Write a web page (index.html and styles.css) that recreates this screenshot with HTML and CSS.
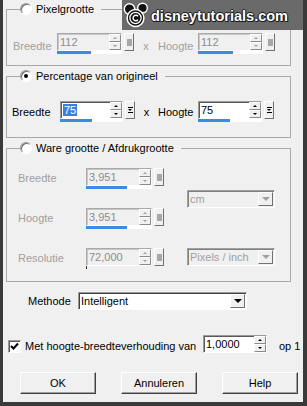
FILE: index.html
```html
<!DOCTYPE html>
<html lang="nl">
<head>
  <meta charset="UTF-8" />
  <meta name="viewport" content="width=device-width, initial-scale=1.0"/>
  <title>Afmetingen wijzigen</title>
  <link rel="stylesheet" href="styles.css">
</head>
<body>

  <div class="dialog">

    <div class="watermark">
      <svg class="logo" width="26" height="26" viewBox="0 0 26 26">
        <circle cx="6.5" cy="7" r="5.2" fill="#111" stroke="#fff" stroke-width="1.4"/>
        <circle cx="19.5" cy="6" r="4.8" fill="#111" stroke="#fff" stroke-width="1.4"/>
        <circle cx="12.5" cy="16" r="8.4" fill="#111" stroke="#fff" stroke-width="1.5"/>
        <circle cx="12.5" cy="16" r="5.6" fill="none" stroke="#fff" stroke-width="1.3"/>
        <path d="M15 14.2 A2.8 2.8 0 1 0 15 17.8" fill="none" stroke="#fff" stroke-width="1.4"/>
      </svg>
      <span class="wm-text">disneytutorials.com</span>
    </div>

    <fieldset class="group">
      <legend><span class="radio"></span>Pixelgrootte</legend>
      <div class="pair-row first">
        <span class="lbl off w-first">Breedte</span>
        <div class="spin off">
          <div class="spin-main">
            <div class="field w65"><span class="val">112</span><span class="arrows"><i class="up"></i><i class="down"></i></span></div>
            <div class="track"><b style="width:52%"></b></div>
          </div>
          <span class="extra"><i class="dot"></i></span>
        </div>
        <span class="times off">x</span>
        <span class="lbl off w-h">Hoogte</span>
        <div class="spin off">
          <div class="spin-main">
            <div class="field w65"><span class="val">112</span><span class="arrows"><i class="up"></i><i class="down"></i></span></div>
            <div class="track"><b style="width:54%"></b></div>
          </div>
          <span class="extra"><i class="dot"></i></span>
        </div>
      </div>
    </fieldset>

    <fieldset class="group">
      <legend><span class="radio on"></span>Percentage van origineel</legend>
      <div class="pair-row second">
        <span class="lbl w-second">Breedte</span>
        <div class="spin">
          <div class="spin-main">
            <div class="field w63"><span class="val"><span class="sel">75</span></span><span class="arrows"><i class="up"></i><i class="down"></i></span></div>
            <div class="track"><b style="width:50%"></b></div>
          </div>
          <span class="extra"><i class="preset"></i></span>
        </div>
        <span class="times narrow">x</span>
        <span class="lbl w-h">Hoogte</span>
        <div class="spin">
          <div class="spin-main">
            <div class="field w64"><span class="val">75</span><span class="arrows"><i class="up"></i><i class="down"></i></span></div>
            <div class="track"><b style="width:50%"></b></div>
          </div>
          <span class="extra"><i class="preset"></i></span>
        </div>
      </div>
    </fieldset>

    <fieldset class="group">
      <legend><span class="radio"></span>Ware grootte / Afdrukgrootte</legend>
      <div class="real-grid">
        <span class="lbl off">Breedte</span>
        <div class="spin off">
          <div class="spin-main">
            <div class="field w66"><span class="val">3,951</span><span class="arrows"><i class="up"></i><i class="down"></i></span></div>
            <div class="track"><b style="width:62%"></b></div>
          </div>
          <span class="extra"><i class="dot"></i></span>
        </div>
        <div class="select off unit"><span>cm</span><span class="drop"></span></div>

        <span class="lbl off">Hoogte</span>
        <div class="spin off">
          <div class="spin-main">
            <div class="field w66"><span class="val">3,951</span><span class="arrows"><i class="up"></i><i class="down"></i></span></div>
            <div class="track"><b style="width:62%"></b></div>
          </div>
          <span class="extra"><i class="dot"></i></span>
        </div>

        <span class="lbl off">Resolutie</span>
        <div class="spin off">
          <div class="spin-main">
            <div class="field w66"><span class="val">72,000</span><span class="arrows"><i class="up"></i><i class="down"></i></span></div>
            <div class="track empty"></div>
          </div>
          <span class="extra"><i class="dot"></i></span>
        </div>
        <div class="select off res"><span>Pixels / inch</span><span class="drop"></span></div>
      </div>
    </fieldset>

    <div class="method-row">
      <span class="lbl">Methode</span>
      <div class="select method"><span>Intelligent</span><span class="drop"></span></div>
    </div>

    <div class="ratio-row">
      <span class="check">
        <svg width="9" height="9" viewBox="0 0 9 9"><path d="M1 4 L3.5 6.5 L8 1.5" fill="none" stroke="#000" stroke-width="2"/></svg>
      </span>
      <span class="ratio-text">Met hoogte-breedteverhouding van</span>
      <div class="field ratio"><span class="val">1,0000</span><span class="arrows"><i class="up"></i><i class="down"></i></span></div>
      <span class="op">op 1</span>
    </div>

    <div class="button-row">
      <button class="btn">OK</button>
      <button class="btn">Annuleren</button>
      <button class="btn">Help</button>
    </div>

  </div>

</body>
</html>
```

FILE: styles.css
```css
body {
  margin: 0;
  font-family: 'Liberation Sans', Arial, sans-serif;
  font-size: 11px;
  color: #000;
  background-color: #3a3a3a;
}
.dialog {
  position: relative;
  width: 307px;
  height: 406px;
  box-sizing: border-box;
  padding-top: 2px;
  background-color: #f0f0f0;
  border-left: 3px solid #3a3a3a;
  border-right: 4px solid #3a3a3a;
  border-bottom: 4px solid #3a3a3a;
  overflow: hidden;
}

/* watermark over the top right */
.watermark {
  position: absolute;
  top: 0;
  right: -4px;
  width: 185px;
  height: 30px;
  background-color: #6a6a6a;
  display: flex;
  align-items: center;
  gap: 2px;
  padding-left: 1px;
  box-sizing: border-box;
  z-index: 2;
}
.wm-text {
  font-weight: bold;
  font-size: 14.5px;
  color: #fff;
  margin-top: 2px;
  text-shadow: 1px 0 0 #1a1a1a, -1px 0 0 #1a1a1a, 0 1px 0 #1a1a1a, 0 -1px 0 #1a1a1a, 1px 1px 0 #1a1a1a;
}

/* group boxes */
.group {
  margin: 3px 12px 0 3px;
  padding: 0;
  min-width: 0;
  border: 1px solid #a9a9a9;
}
.group:first-of-type {
  margin-top: 0;
}
.group legend {
  margin-left: 13px;
  padding: 0 7px 0 0;
  height: 14px;
  display: flex;
  align-items: center;
  gap: 4px;
}
.radio {
  width: 12px;
  height: 12px;
  box-sizing: border-box;
  border-radius: 50%;
  background-color: #fff;
  border: 1px solid;
  border-color: #9a9a9a #fff #fff #9a9a9a;
  box-shadow: inset 1px 1px 0 #6d6d6d;
  display: flex;
  align-items: center;
  justify-content: center;
}
.radio.on::after {
  content: "";
  width: 4px;
  height: 4px;
  border-radius: 50%;
  background-color: #000;
}

.lbl {
  line-height: 13px;
  white-space: nowrap;
}
.off {
  color: #a0a0a0;
}

.pair-row {
  display: flex;
  align-items: flex-start;
}
.pair-row.first {
  padding: 17px 0 11px 6px;
}
.pair-row.second {
  padding: 18px 0 15px 5px;
}
.pair-row.first .lbl,
.pair-row.first .times {
  margin-top: 7px;
}
.pair-row.second .lbl,
.pair-row.second .times {
  margin-top: 5px;
}
.w-first {
  width: 44px;
}
.w-second {
  width: 48px;
}
.w-h {
  width: 35px;
  text-align: right;
  margin-right: 5px;
}
.times {
  width: 24px;
  text-align: center;
  line-height: 13px;
}
.times.narrow {
  width: 23px;
}

/* spin field with slider track */
.spin {
  display: flex;
  align-items: flex-start;
  gap: 2px;
}
.spin-main {
  display: flex;
  flex-direction: column;
}
.field {
  height: 18px;
  box-sizing: border-box;
  display: flex;
  justify-content: space-between;
  background-color: #fff;
  border: 1px solid;
  border-color: #9a9a9a #fff #fff #9a9a9a;
  box-shadow: inset 1px 1px 0 #5a5a5a;
}
.spin.off .field {
  background-color: #f0f0f0;
  border-color: #a8a8a8 #fff #fff #a8a8a8;
  box-shadow: inset 1px 1px 0 #c8c8c8;
  color: #8c8c8c;
}
.w63 { width: 63px; }
.w64 { width: 64px; }
.w65 { width: 65px; }
.w66 { width: 66px; }
.val {
  padding: 2px 0 0 2px;
  line-height: 12px;
}
.sel {
  background-color: #3d7fdc;
  color: #fff;
  padding: 0 1px;
}
.arrows {
  width: 12px;
  display: flex;
  flex-direction: column;
}
.arrows i {
  flex: 1;
  box-sizing: border-box;
  background-color: #f0f0f0;
  border: 1px solid;
  border-color: #fff #8a8a8a #8a8a8a #fff;
  display: flex;
  align-items: center;
  justify-content: center;
}
.arrows i::after {
  content: "";
  border-left: 2px solid transparent;
  border-right: 2px solid transparent;
}
.arrows .up::after {
  border-bottom: 2px solid #000;
}
.arrows .down::after {
  border-top: 2px solid #000;
}
.spin.off .arrows .up::after {
  border-bottom-color: #a0a0a0;
}
.spin.off .arrows .down::after {
  border-top-color: #a0a0a0;
}
.track {
  height: 3px;
  background-color: #fff;
}
.track b {
  display: block;
  height: 100%;
  background-color: #3d8be0;
}
.track.empty {
  background-color: transparent;
  border-left: 1px solid #333;
}
.extra {
  width: 10px;
  height: 18px;
  box-sizing: border-box;
  background-color: #f0f0f0;
  border: 1px solid;
  border-color: #fff #707070 #707070 #fff;
  display: flex;
  flex-direction: column;
  align-items: center;
  justify-content: center;
}
.extra .dot {
  width: 5px;
  height: 7px;
  background-color: #a8a8a8;
}
.extra .preset {
  width: 5px;
  height: 6px;
  box-sizing: border-box;
  border-top: 1px solid #000;
  border-bottom: 1px solid #000;
  display: flex;
  justify-content: center;
  align-items: center;
}
.extra .preset::after {
  content: "";
  border-left: 2px solid transparent;
  border-right: 2px solid transparent;
  border-top: 2px solid #000;
}

/* drop-down lists */
.select {
  height: 18px;
  box-sizing: border-box;
  display: flex;
  align-items: center;
  justify-content: space-between;
  padding-left: 2px;
  background-color: #fff;
  border: 1px solid;
  border-color: #9a9a9a #fff #fff #9a9a9a;
  box-shadow: inset 1px 1px 0 #404040;
}
.select.off {
  background-color: #f0f0f0;
  color: #a0a0a0;
  border-color: #a0a0a0 #fff #fff #a0a0a0;
  box-shadow: inset 1px 1px 0 #808080;
}
.drop {
  width: 15px;
  height: 14px;
  margin-right: 1px;
  box-sizing: border-box;
  background-color: #f0f0f0;
  border: 1px solid;
  border-color: #fff #707070 #707070 #fff;
  display: flex;
  align-items: center;
  justify-content: center;
}
.drop::after {
  content: "";
  border-left: 4px solid transparent;
  border-right: 4px solid transparent;
  border-top: 4px solid #000;
}
.select.off .drop::after {
  border-top-color: #a0a0a0;
}

/* real size grid */
.real-grid {
  display: grid;
  grid-template-columns: 68px auto 1fr;
  grid-template-rows: repeat(3, 21px);
  row-gap: 19px;
  padding: 13px 0 12px 11px;
}
.real-grid .lbl {
  margin-top: 4px;
}
.real-grid .unit {
  grid-column: 3;
  grid-row: 1 / span 2;
  align-self: center;
}
.real-grid .res {
  grid-column: 3;
  grid-row: 3;
}
.unit,
.res {
  width: 88px;
  margin-left: 23px;
}

.method-row {
  display: flex;
  align-items: flex-start;
  margin-top: 10px;
  padding-left: 25px;
}
.method-row .lbl {
  width: 50px;
  margin-top: 3px;
}
.method {
  width: 169px;
}

.ratio-row {
  display: flex;
  align-items: flex-start;
  margin-top: 25px;
  padding-left: 5px;
}
.check {
  width: 13px;
  height: 13px;
  box-sizing: border-box;
  margin-top: 5px;
  background-color: #fff;
  border: 1px solid;
  border-color: #9a9a9a #fff #fff #9a9a9a;
  box-shadow: inset 1px 1px 0 #5a5a5a;
  display: flex;
  align-items: center;
  justify-content: center;
}
.ratio-text {
  width: 182px;
  padding-left: 4px;
  box-sizing: border-box;
  line-height: 13px;
  margin-top: 5px;
  white-space: nowrap;
}
.field.ratio {
  width: 64px;
}
.op {
  margin: 5px 0 0 12px;
  line-height: 13px;
}

.button-row {
  display: flex;
  gap: 25px;
  margin-top: 19px;
  padding-left: 17px;
}
.btn {
  width: 76px;
  height: 22px;
  margin: 0;
  padding: 0;
  font-family: inherit;
  font-size: 11px;
  color: #000;
  background-color: #f0f0f0;
  border: 1px solid;
  border-color: #fff #404040 #404040 #fff;
  box-shadow: inset -1px -1px 0 #a0a0a0;
}
```
